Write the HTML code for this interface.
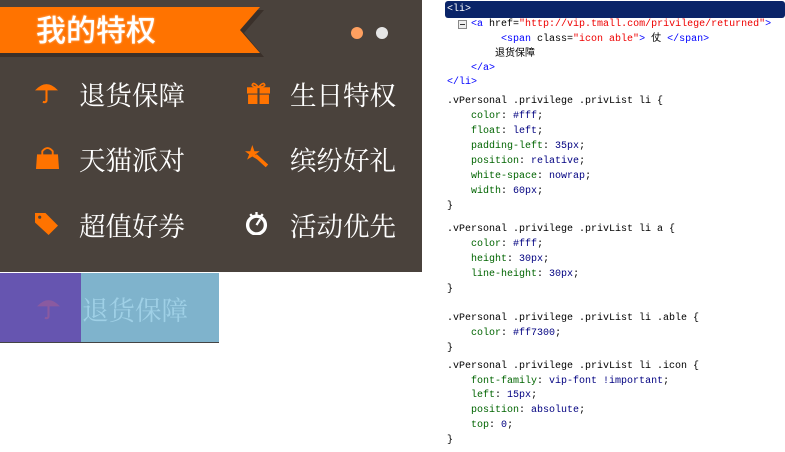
<!DOCTYPE html><html><head><meta charset="utf-8"><style>
body{margin:0;width:785px;height:452px;background:#fff;position:relative;overflow:hidden;font-family:"Liberation Sans","Noto Sans CJK SC",sans-serif}
.p{position:absolute;left:0;top:0;width:422px;height:272px;background:#4a423c}
.t{position:absolute;color:#fff;font-size:26.5px;line-height:30px;font-family:"Liberation Serif","Noto Serif CJK SC",serif;white-space:nowrap}
.ic{position:absolute;width:23px;height:23px}
.c{position:absolute;left:447px;font:10px/14px "Liberation Mono","Noto Sans CJK SC",monospace;white-space:pre;color:#000}
.g{color:#006400}.n{color:#000080}.r{color:#e00}.b{color:#00f}
</style></head><body>
<div class="p"></div>
<svg style="position:absolute;left:0;top:0" width="270" height="60"><polygon points="0,10 264,10 244,33 264,57 0,57" fill="#3a302a"/><polygon points="0,7 260,7 240,30 260,53 0,53" fill="#ff7300"/></svg>
<div class="t" style="left:36px;top:17px;font-family:'Liberation Sans','Noto Sans CJK SC',sans-serif;font-size:30px;font-weight:500;text-shadow:0 0 2px rgba(255,255,255,.6)">我的特权</div>
<div style="position:absolute;left:351px;top:27px;width:12px;height:12px;border-radius:6px;background:#ffa060"></div>
<div style="position:absolute;left:376px;top:27px;width:12px;height:12px;border-radius:6px;background:#e6e6e6"></div>
<svg class="ic" style="left:35px;top:81px" viewBox="0 0 22 22"><path d="M0 9 Q11 -3 22 9 Z" fill="#ff7300"/><path d="M11 8 V18 Q11 21 7.5 20" stroke="#ff7300" stroke-width="2" fill="none"/></svg>
<div class="t" style="left:79px;top:81px">退货保障</div>
<svg class="ic" style="left:247px;top:81px" viewBox="0 0 22 22"><rect x="0" y="6" width="22" height="6" fill="#ff7300"/><rect x="1" y="13" width="20" height="9" fill="#ff7300"/><rect x="10" y="6" width="2" height="16" fill="#4a423c"/><path d="M11 6 Q6 0 5 4 Q6 6 11 6 Q16 6 17 4 Q16 0 11 6" stroke="#ff7300" stroke-width="1.6" fill="none"/></svg>
<div class="t" style="left:290px;top:81px">生日特权</div>
<svg class="ic" style="left:36px;top:146px" viewBox="0 0 22 22"><path d="M1 8 H21 L22 22 H0 Z" fill="#ff7300"/><path d="M6 10 V5 Q11 -1 16 5 V10" stroke="#ff7300" stroke-width="1.8" fill="none"/></svg>
<div class="t" style="left:79px;top:146px">天猫派对</div>
<svg class="ic" style="left:245px;top:145px" viewBox="0 0 22 22"><polygon points="7,0 9,6 14,6 10,9 12,14 7,11 2,14 4,9 0,6 5,6" fill="#ff7300"/><path d="M10 10 L21 20" stroke="#ff7300" stroke-width="3.5"/></svg>
<div class="t" style="left:290px;top:146px">缤纷好礼</div>
<svg class="ic" style="left:35px;top:212px" viewBox="0 0 22 22"><path d="M0 1 H10 L22 13 L13 22 L0 10 Z" fill="#ff7300"/><circle cx="4.5" cy="5" r="1.5" fill="#4a423c"/></svg>
<div class="t" style="left:79px;top:212px">超值好券</div>
<svg class="ic" style="left:245px;top:212px" viewBox="0 0 22 22"><circle cx="11" cy="12.5" r="8.5" fill="none" stroke="#fff" stroke-width="3.2"/><path d="M11 12.5 L14.5 7" stroke="#fff" stroke-width="2.2"/><path d="M5 2 L7.5 5 M11 0 V3 M17 2 L14.5 5" stroke="#fff" stroke-width="2.2"/></svg>
<div class="t" style="left:290px;top:212px">活动优先</div>
<div style="position:absolute;left:0;top:273px;width:81px;height:69px;background:#6655b0"></div>
<div style="position:absolute;left:81px;top:273px;width:138px;height:69px;background:#7fb3cc"></div>
<div style="position:absolute;left:0;top:342px;width:219px;height:1px;background:#444"></div>
<svg class="ic" style="left:37px;top:297px" viewBox="0 0 22 22"><path d="M0 9 Q11 -3 22 9 Z" fill="#8a5aa0"/><path d="M11 8 V18 Q11 21 7.5 20" stroke="#8a5aa0" stroke-width="2" fill="none"/></svg>
<div class="t" style="left:82px;top:296px;color:#9fd0e6">退货保障</div>
<div style="position:absolute;left:445px;top:1px;width:340px;height:17px;background:#0a2468;border-radius:3px"></div>
<div class="c" style="top:3px;color:#fff">&lt;li&gt;</div>
<div style="position:absolute;left:458px;top:20px;width:7px;height:7px;border:1px solid #888;background:#eee"></div>
<div style="position:absolute;left:460px;top:24px;width:5px;height:1px;background:#333"></div>
<div class="c" style="top:18px">    <span class="b">&lt;a</span> href=<span class="r">"http://vip.tmall.com/privilege/returned"</span><span class="b">&gt;</span></div>
<div class="c" style="top:33px">         <span class="b">&lt;span</span> class=<span class="r">"icon able"</span><span class="b">&gt;</span> 仗 <span class="b">&lt;/span&gt;</span></div>
<div class="c" style="top:48px">        退货保障</div>
<div class="c" style="top:62px">    <span class="b">&lt;/a&gt;</span></div>
<div class="c" style="top:76px"><span class="b">&lt;/li&gt;</span></div>
<div class="c" style="top:95px">.vPersonal .privilege .privList li {</div>
<div class="c" style="top:110px">    <span class="g">color</span>: <span class="n">#fff</span>;</div>
<div class="c" style="top:125px">    <span class="g">float</span>: <span class="n">left</span>;</div>
<div class="c" style="top:140px">    <span class="g">padding-left</span>: <span class="n">35px</span>;</div>
<div class="c" style="top:155px">    <span class="g">position</span>: <span class="n">relative</span>;</div>
<div class="c" style="top:170px">    <span class="g">white-space</span>: <span class="n">nowrap</span>;</div>
<div class="c" style="top:185px">    <span class="g">width</span>: <span class="n">60px</span>;</div>
<div class="c" style="top:200px">}</div>
<div class="c" style="top:223px">.vPersonal .privilege .privList li a {</div>
<div class="c" style="top:238px">    <span class="g">color</span>: <span class="n">#fff</span>;</div>
<div class="c" style="top:253px">    <span class="g">height</span>: <span class="n">30px</span>;</div>
<div class="c" style="top:268px">    <span class="g">line-height</span>: <span class="n">30px</span>;</div>
<div class="c" style="top:283px">}</div>
<div class="c" style="top:312px">.vPersonal .privilege .privList li .able {</div>
<div class="c" style="top:327px">    <span class="g">color</span>: <span class="n">#ff7300</span>;</div>
<div class="c" style="top:342px">}</div>
<div class="c" style="top:360px">.vPersonal .privilege .privList li .icon {</div>
<div class="c" style="top:375px">    <span class="g">font-family</span>: <span class="n">vip-font !important</span>;</div>
<div class="c" style="top:389px">    <span class="g">left</span>: <span class="n">15px</span>;</div>
<div class="c" style="top:404px">    <span class="g">position</span>: <span class="n">absolute</span>;</div>
<div class="c" style="top:419px">    <span class="g">top</span>: <span class="n">0</span>;</div>
<div class="c" style="top:434px">}</div>
</body></html>
